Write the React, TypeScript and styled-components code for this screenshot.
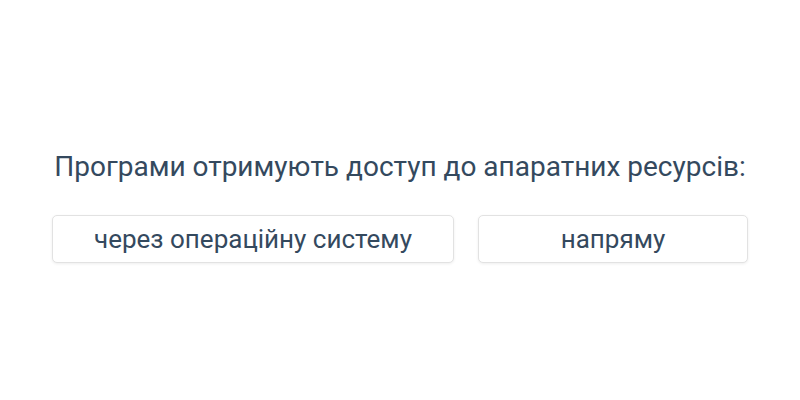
import React from "react";
import styled, { createGlobalStyle } from "styled-components";

const Global = createGlobalStyle`
  html, body { margin: 0; padding: 0; background: #fff; }
  body { font-family: Roboto, "Noto Sans", sans-serif; }
`;

const Page = styled.div`
  box-sizing: border-box;
  width: 800px;
  height: 400px;
  padding-top: 14px;
  display: flex;
  flex-direction: column;
  align-items: center;
  justify-content: center;
  color: #34495e;
`;

const Question = styled.div`
  font-size: 28px;
  line-height: 32px;
  margin-bottom: 32px;
  text-align: center;
`;

const Options = styled.div`
  display: grid;
  grid-template-columns: 402px 270px;
  gap: 24px;
`;

const Option = styled.button`
  height: 48px;
  background: #fff;
  border: 1px solid #e2e2e2;
  border-radius: 5px;
  box-shadow: 0 1px 3px rgba(0, 0, 0, 0.07);
  font-family: Roboto, "Noto Sans", sans-serif;
  font-size: 26px;
  color: #34495e;
  cursor: pointer;
  padding: 0;
`;

export default function App() {
  return (
    <>
      <Global />
      <Page>
        <Question>Програми отримують доступ до апаратних ресурсів:</Question>
        <Options>
          <Option>через операційну систему</Option>
          <Option>напряму</Option>
        </Options>
      </Page>
    </>
  );
}
